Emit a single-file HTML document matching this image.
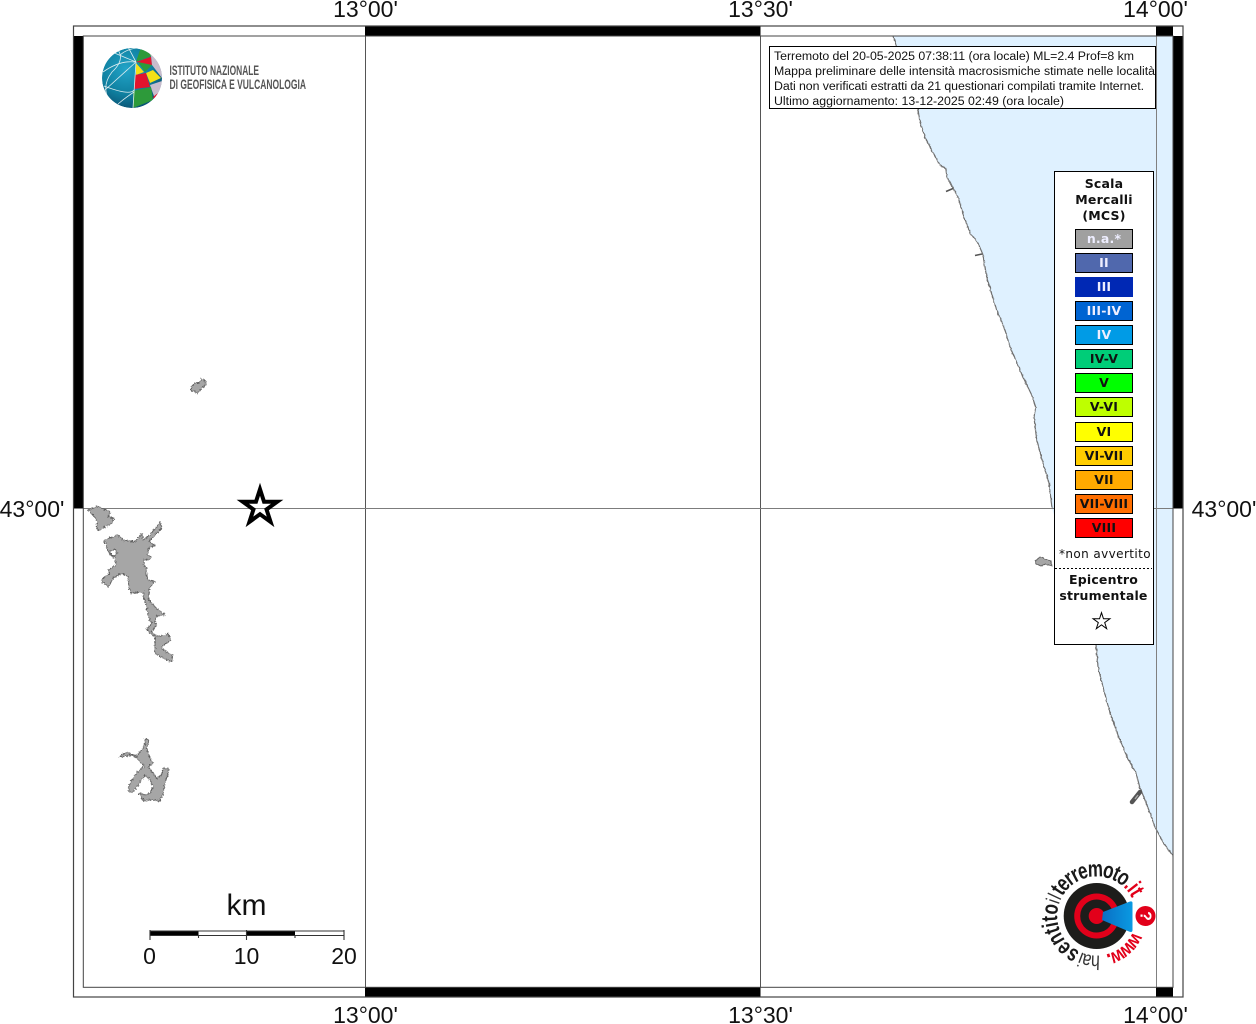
<!DOCTYPE html>
<html lang="it">
<head>
<meta charset="utf-8">
<title>Mappa intensità macrosismiche</title>
<style>
html,body{margin:0;padding:0;background:#fff;width:1256px;height:1024px;overflow:hidden}
svg{display:block}
.lab{font:23px "Liberation Sans",sans-serif;fill:#111}
.info{font:12.33px "Liberation Sans",sans-serif;fill:#111}
.lt{font:bold 12.5px "DejaVu Sans",sans-serif;letter-spacing:.2px;text-anchor:middle;fill:#111}
.wt{fill:#eef}
.lb{font-family:"Liberation Sans",sans-serif;font-size:23px;text-anchor:middle}
.b{font-weight:bold;fill:#1a1a1a}
.r{font-weight:bold;fill:#e2001a}
.t{fill:#333;font-size:20px}
</style>
</head>
<body>
<svg width="1256" height="1024" viewBox="0 0 1256 1024" xmlns="http://www.w3.org/2000/svg">
<defs>
<radialGradient id="gb" cx="40%" cy="35%" r="70%"><stop offset="0" stop-color="#22a4c8"/><stop offset=".6" stop-color="#0f7f9f"/><stop offset="1" stop-color="#0a4f70"/></radialGradient>
<linearGradient id="cone" x1="0" x2="1" y1="0" y2="0"><stop offset="0" stop-color="#0a6fc4"/><stop offset="1" stop-color="#0a9ae2"/></linearGradient>
<clipPath id="gc"><circle cx="132" cy="78" r="30"/></clipPath>
<filter id="rough" filterUnits="userSpaceOnUse" x="60" y="360" width="170" height="460">
<feTurbulence type="fractalNoise" baseFrequency=".55" numOctaves="2" seed="4"/>
<feDisplacementMap in="SourceGraphic" scale="4" xChannelSelector="R" yChannelSelector="G"/>
</filter>
<filter id="rough2" filterUnits="userSpaceOnUse" x="880" y="30" width="300" height="840">
<feTurbulence type="fractalNoise" baseFrequency=".3" numOctaves="2" seed="7"/>
<feDisplacementMap in="SourceGraphic" scale="2" xChannelSelector="R" yChannelSelector="G"/>
</filter>
</defs>

<!-- sea -->
<polygon fill="#dff1ff" points="893,36 1173,36 1173,856 1163,842 1155,827 1150,813 1143,795 1140,788 1136,773 1127,757 1118,735 1110,713 1102,683 1098,667 1096,645 1070,570 1052,508 1049,483 1043,463 1036.7,440 1034,417 1035.7,407 1031.7,395 1023,377 1010,347 1005,330 996.7,310 986.7,277 982.7,254 978,243 970,233 964,217 958,197 953,188 946.7,177 946,169 940,165 931.7,150 925,137 920,122 917.7,108 893,36"/>
<g filter="url(#rough2)">
<polyline fill="none" stroke="#707070" stroke-width="1.2" points="893,36 917.7,108 920,122 925,137 931.7,150 940,165 946,169 946.7,177 953,188 958,197 964,217 970,233 978,243 982.7,254 986.7,277 996.7,310 1005,330 1010,347 1023,377 1031.7,395 1035.7,407 1034,417 1036.7,440 1043,463 1049,483 1052,508"/>
<polyline fill="none" stroke="#707070" stroke-width="1.2" points="1096,645 1098,667 1102,683 1110,713 1118,735 1127,757 1136,773 1140,788 1143,795 1150,813 1155,827 1163,842 1173,856"/>
</g>
<path d="M946 191.5L953 188.5M975 255.5L982 254" stroke="#555" stroke-width="1.6" fill="none"/>
<path d="M1132 802L1140 792" stroke="#555" stroke-width="4.5" stroke-linecap="round"/>
<path d="M1135 799L1138 795" stroke="#aaa" stroke-width="1.4"/>

<!-- grid -->
<path d="M365.5 36V987M760.5 36V987" stroke="#555" stroke-width="1" fill="none"/>
<path d="M1156.5 36V987" stroke="#808080" stroke-width="1" fill="none"/>
<path d="M83 508.5H1173" stroke="#7c7c7c" stroke-width="1" fill="none"/>

<!-- lakes -->
<g fill="#a6a6a6" stroke="#5e5e5e" stroke-width=".9" stroke-linejoin="round" filter="url(#rough)">
<polygon points="88.3,509.3 98.3,506.7 110,511.7 108.3,516.7 114,518.3 111.7,523.3 105,526.7 98.3,530.7 96,526.7 98.3,521.7"/>
<path fill-rule="evenodd" d="M104,540 L118.3,535 L123.3,540 L135,541.7 L141.7,533.3 L143.3,540 L151.7,533.3 L160,521.7 L161.7,528.3 L155,535 L149,541.7 L155,545 L149,548.3 L147,555 L151,556.7 L149,560 L144,559 L144,565 L147,568.3 L146,573.3 L148.3,580 L155,581.7 L149,588.3 L149,600 L156.7,608.3 L165,615 L156.7,616 L155,621.7 L156.7,625 L151.7,631.7 L157.3,636.7 L168.3,634 L171,640 L161.7,646.7 L163.3,650 L172.7,655.7 L171.7,661.7 L163.3,658.3 L155,653.3 L155,643.3 L155,636.7 L146.7,630 L151.7,623.3 L148.3,616.7 L146.7,606.7 L143.3,596.7 L143.3,592 L131,593 L129,588.3 L128,576.7 L121.7,573 L113.3,578.3 L108.3,586.7 L102,582 L101.7,579 L109.7,573.3 L108,570 L116,565 L115,558.3 L109,553.3 Z M110,551 L115,549 L117,552 L115,556 L111,555 Z"/>
<polygon points="145,739 149.3,740 146.7,748.3 150,758.3 153.3,763.3 148.3,766.7 156.7,778.3 161.7,775 163.3,768.3 168.3,768.3 168.3,773.3 165,783.3 163.3,793.3 160,801 150,800 143.3,801 139.3,793.3 146.7,795 150.7,791.7 153.3,786.7 150,780 145,775 139.3,783.3 132.7,792.3 129,791.7 128.3,786.7 135,775 141.7,767.7 145,766.7 138.3,760 133.3,755 120,756.7 120.7,755 126.7,752.7 136.7,756 141.7,750 145,745"/>
<polygon points="191,387 195,383 199,383 202,379 206,381 205,386 201,389 197,394 194,391 191,391"/>
</g>
<g fill="#a6a6a6" stroke="#5e5e5e" stroke-width=".9" filter="url(#rough2)">
<polygon points="1035,561 1040,557 1045,559 1051,561 1052,566 1046,564 1041,566 1036,564"/>
</g>

<!-- frame -->
<rect x="73.5" y="36" width="9.5" height="472.5" fill="#000"/>
<rect x="1173" y="36" width="10" height="472.5" fill="#000"/>
<rect x="365" y="26" width="395.5" height="10" fill="#000"/>
<rect x="365" y="987" width="395.5" height="10" fill="#000"/>
<rect x="1156" y="26" width="17" height="10" fill="#000"/>
<rect x="1156" y="987" width="17" height="10" fill="#000"/>
<rect x="73.5" y="26" width="1109.5" height="971" fill="none" stroke="#444" stroke-width="1.2"/>
<rect x="83.3" y="36" width="1089.7" height="951.3" fill="none" stroke="#444" stroke-width="1"/>

<!-- axis labels -->
<g class="lab" text-anchor="middle">
<text x="365.5" y="17">13°00'</text>
<text x="760.5" y="17">13°30'</text>
<text x="1155.5" y="17">14°00'</text>
<text x="365.5" y="1023">13°00'</text>
<text x="760.5" y="1023">13°30'</text>
<text x="1155.5" y="1023">14°00'</text>
<text x="32" y="517">43°00'</text>
<text x="1224" y="517">43°00'</text>
</g>

<!-- epicentre star -->
<g transform="translate(260 507.3) scale(.86)"><polygon vector-effect="non-scaling-stroke" fill="none" stroke="#000" stroke-width="4" points="0,-21 4.7,-6.5 20,-6.5 7.6,2.5 12.3,17 0,8 -12.3,17 -7.6,2.5 -20,-6.5 -4.7,-6.5"/></g>

<!-- INGV logo -->
<g clip-path="url(#gc)">
<circle cx="132" cy="78" r="30" fill="url(#gb)"/>
<polygon fill="#2d9a3a" points="136,61.7 140,50 146,47 152,56"/>
<polygon fill="#e2142d" points="136,62 151,56.7 152,65"/>
<polygon fill="#c8bccc" points="146,47 165,60 165,82 152,65 151,56"/>
<polygon fill="#f4e016" points="136,63 144,72 136,75"/>
<polygon fill="#2d9a3a" points="138,62 152,65 145,72"/>
<polygon fill="#f4e016" points="153,70 161,78 150,83 146,73"/>
<polygon fill="#e2142d" points="135,75 146,73 150,87 134,89"/>
<polygon fill="#c8bccc" points="150,85 165,80 162,95 155,99"/>
<polygon fill="#2d9a3a" points="133,91 151,87 153,100 133,108"/>
<polygon fill="#e2142d" points="153,97 158,93 155,100"/>
<g fill="none" stroke="#dcecf0" stroke-width=".8">
<path d="M136 62L133 108M136 62L105 90M136 62L112 52M136 62L128 47"/>
<path d="M103 72Q120 60 135 62"/>
<path d="M118 50Q125 60 112 72Q102 85 108 98"/>
<path d="M104 86Q130 96 134 90"/>
<path d="M118 104Q125 98 134 92"/>
<path d="M120 55Q128 48 140 48"/>
</g>
</g>
<g font-family="'Liberation Sans',sans-serif" font-size="13.5" font-weight="bold" fill="#555">
<text x="169.5" y="75" textLength="89.5" lengthAdjust="spacingAndGlyphs">ISTITUTO NAZIONALE</text>
<text x="169.5" y="89" textLength="136.5" lengthAdjust="spacingAndGlyphs">DI GEOFISICA E VULCANOLOGIA</text>
</g>

<!-- info box -->
<rect x="769.5" y="46.5" width="386" height="62" fill="#fff" stroke="#000" stroke-width="1"/>
<g class="info">
<text x="774" y="60" textLength="360">Terremoto del 20-05-2025 07:38:11 (ora locale) ML=2.4 Prof=8 km</text>
<text x="774" y="75" textLength="381">Mappa preliminare delle intensità macrosismiche stimate nelle località</text>
<text x="774" y="90" textLength="370">Dati non verificati estratti da 21 questionari compilati tramite Internet.</text>
<text x="774" y="105" textLength="290">Ultimo aggiornamento: 13-12-2025 02:49 (ora locale)</text>
</g>

<!-- legend -->
<rect x="1054.5" y="171.5" width="99" height="473" fill="#fff" stroke="#000" stroke-width="1"/>
<text class="lt" x="1104" y="188">Scala</text>
<text class="lt" x="1104" y="204">Mercalli</text>
<text class="lt" x="1104" y="220">(MCS)</text>
<g stroke="#000" stroke-width="1">
<rect x="1075.5" y="229.5" width="57" height="19" fill="#a0a0a0"/>
<rect x="1075.5" y="253.5" width="57" height="19" fill="#5068ad"/>
<rect x="1075.5" y="277.5" width="57" height="19" fill="#0028b4" stroke="#0028b4"/>
<rect x="1075.5" y="301.5" width="57" height="19" fill="#0064d2"/>
<rect x="1075.5" y="325.5" width="57" height="19" fill="#009be6"/>
<rect x="1075.5" y="349.5" width="57" height="19" fill="#00cd78"/>
<rect x="1075.5" y="373.5" width="57" height="19" fill="#00ff00"/>
<rect x="1075.5" y="397.5" width="57" height="19" fill="#beff00"/>
<rect x="1075.5" y="422.5" width="57" height="19" fill="#ffff00"/>
<rect x="1075.5" y="446.5" width="57" height="19" fill="#ffcd00"/>
<rect x="1075.5" y="470.5" width="57" height="19" fill="#ffaa00"/>
<rect x="1075.5" y="494.5" width="57" height="19" fill="#ff6e00"/>
<rect x="1075.5" y="518.5" width="57" height="19" fill="#ff0000"/>
</g>
<text class="lt wt" x="1104" y="243">n.a.*</text>
<text class="lt wt" x="1104" y="267">II</text>
<text class="lt wt" x="1104" y="291">III</text>
<text class="lt wt" x="1104" y="315">III-IV</text>
<text class="lt wt" x="1104" y="339">IV</text>
<text class="lt" x="1104" y="363">IV-V</text>
<text class="lt" x="1104" y="387">V</text>
<text class="lt" x="1104" y="411">V-VI</text>
<text class="lt" x="1104" y="436">VI</text>
<text class="lt" x="1104" y="460">VI-VII</text>
<text class="lt" x="1104" y="484">VII</text>
<text class="lt" x="1104" y="508">VII-VIII</text>
<text class="lt" x="1104" y="532">VIII</text>
<text x="1105" y="558" text-anchor="middle" font-family="'DejaVu Sans',sans-serif" font-size="12" letter-spacing=".4" fill="#111">*non avvertito</text>
<path d="M1055 568.5H1152" stroke="#000" stroke-width="1" stroke-dasharray="2 2"/>
<text class="lt" x="1103.5" y="584">Epicentro</text>
<text class="lt" x="1103.5" y="600">strumentale</text>
<g transform="translate(1101.5 621.5) scale(.42)"><polygon vector-effect="non-scaling-stroke" fill="#fff" stroke="#000" stroke-width="1" points="0,-21 4.7,-6.5 20,-6.5 7.6,2.5 12.3,17 0,8 -12.3,17 -7.6,2.5 -20,-6.5 -4.7,-6.5"/></g>

<!-- scale bar -->
<rect x="150" y="931" width="48.5" height="5" fill="#000"/>
<rect x="246.5" y="931" width="48.5" height="5" fill="#000"/>
<path d="M150 931H344V935.5H150Z" fill="none" stroke="#333" stroke-width="1"/>
<path d="M150 930V940M246.5 930V940M344 930V940M198.5 935V938M295 935V938" stroke="#333" stroke-width="1.1" fill="none"/>
<g class="lab" text-anchor="middle">
<text x="246.5" y="915" style="font-size:30px">km</text>
<text x="149.5" y="964">0</text>
<text x="246.5" y="964">10</text>
<text x="344" y="964">20</text>
</g>

<!-- hai sentito logo -->
<circle cx="1096.7" cy="916" r="33" fill="#1d1d1b"/>
<path d="M1114.4 907.8A19.5 19.5 0 1 0 1114.4 924.2" fill="none" stroke="#e2001a" stroke-width="6"/>
<circle cx="1096.7" cy="916" r="8" fill="#e2001a"/>
<path d="M1103 912L1130 901.5Q1132.5 901 1132.5 903V930Q1132.5 933 1129 931.5L1102 920Z" fill="url(#cone)"/>
<circle cx="1145.5" cy="916" r="10" fill="#e2001a"/>
<text transform="translate(1140.5 916) rotate(90)" x="0" y="0" text-anchor="middle" font-family="'Liberation Sans',sans-serif" font-weight="bold" font-size="16" fill="#fff">?</text>
<g class="lb">
<text class="b" transform="translate(1096.7 916) rotate(211.9) translate(0 -39.5) scale(.74 1)">s</text>
<text class="b" transform="translate(1096.7 916) rotate(225.6) translate(0 -39.5) scale(.74 1)">e</text>
<text class="b" transform="translate(1096.7 916) rotate(240) translate(0 -39.5) scale(.74 1)">n</text>
<text class="b" transform="translate(1096.7 916) rotate(251.7) translate(0 -39.5) scale(.74 1)">t</text>
<text class="b" transform="translate(1096.7 916) rotate(259.2) translate(0 -39.5) scale(.74 1)">i</text>
<text class="b" transform="translate(1096.7 916) rotate(266.8) translate(0 -39.5) scale(.74 1)">t</text>
<text class="b" transform="translate(1096.7 916) rotate(278.5) translate(0 -39.5) scale(.74 1)">o</text>
<text class="t" transform="translate(1096.7 916) rotate(289) translate(0 -39.5) scale(.8 1)">i</text>
<text class="t" transform="translate(1096.7 916) rotate(295) translate(0 -39.5) scale(.8 1)">l</text>
<text class="b" transform="translate(1096.7 916) rotate(303.6) translate(0 -39.5) scale(.74 1)">t</text>
<text class="b" transform="translate(1096.7 916) rotate(313.4) translate(0 -39.5) scale(.74 1)">e</text>
<text class="b" transform="translate(1096.7 916) rotate(323.7) translate(0 -39.5) scale(.74 1)">r</text>
<text class="b" transform="translate(1096.7 916) rotate(332.2) translate(0 -39.5) scale(.74 1)">r</text>
<text class="b" transform="translate(1096.7 916) rotate(342.5) translate(0 -39.5) scale(.74 1)">e</text>
<text class="b" transform="translate(1096.7 916) rotate(358.3) translate(0 -39.5) scale(.74 1)">m</text>
<text class="b" transform="translate(1096.7 916) rotate(374.7) translate(0 -39.5) scale(.74 1)">o</text>
<text class="b" transform="translate(1096.7 916) rotate(385) translate(0 -39.5) scale(.74 1)">t</text>
<text class="b" transform="translate(1096.7 916) rotate(395.3) translate(0 -39.5) scale(.74 1)">o</text>
<text class="r" transform="translate(1096.7 916) rotate(405.3) translate(0 -39.5) scale(.74 1)">.</text>
<text class="r" transform="translate(1096.7 916) rotate(411.9) translate(0 -39.5) scale(.74 1)">i</text>
<text class="r" transform="translate(1096.7 916) rotate(419) translate(0 -39.5) scale(.74 1)">t</text>
<text class="r" transform="translate(1096.7 916) rotate(122.6) translate(0 -39.5) scale(.82 1)" style="font-size:20px">w</text>
<text class="r" transform="translate(1096.7 916) rotate(137.8) translate(0 -39.5) scale(.82 1)" style="font-size:20px">w</text>
<text class="r" transform="translate(1096.7 916) rotate(153) translate(0 -39.5) scale(.82 1)" style="font-size:20px">w</text>
<text class="r" transform="translate(1096.7 916) rotate(163.3) translate(0 -39.5) scale(.82 1)">.</text>
<text class="t" transform="translate(1096.7 916) rotate(181.6) translate(0 -39.5) scale(.8 1)">h</text>
<text class="t" transform="translate(1096.7 916) rotate(192.8) translate(0 -39.5) scale(.8 1)">a</text>
<text class="t" transform="translate(1096.7 916) rotate(200.8) translate(0 -39.5) scale(.8 1)">i</text>
</g>
</svg>
</body>
</html>
